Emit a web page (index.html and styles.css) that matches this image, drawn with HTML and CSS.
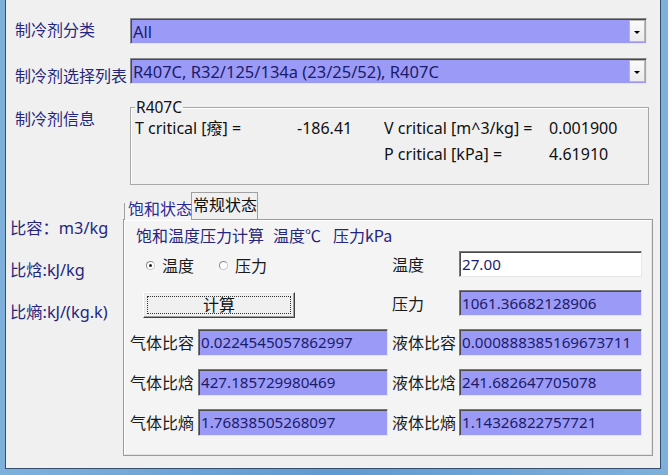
FILE: index.html
```html
<!DOCTYPE html>
<html lang="zh">
<head>
<meta charset="utf-8">
<title>制冷剂</title>
<link rel="stylesheet" href="styles.css">
</head>
<body>
<div class="frame">
  <div class="client">
    <div class="row r1">
      <div class="lbl navy">制冷剂分类</div>
      <div class="combo"><span class="val">All</span><span class="drop"><i class="tri"></i></span></div>
    </div>
    <div class="row r2">
      <div class="lbl navy">制冷剂选择列表</div>
      <div class="combo"><span class="val">R407C, R32/125/134a (23/25/52), R407C</span><span class="drop"><i class="tri"></i></span></div>
    </div>
    <div class="row r3">
      <div class="lbl navy">制冷剂信息</div>
      <fieldset class="group">
        <legend class="legend">R407C</legend>
        <div class="ginfo">
          <span>T critical [癈] =</span><span>-186.41</span><span>V critical [m^3/kg] =</span><span>0.001900</span>
          <span></span><span></span><span>P critical [kPa] =</span><span>4.61910</span>
        </div>
      </fieldset>
    </div>
    <div class="lower">
      <div class="side navy">
        <div class="sl">比容：m3/kg</div>
        <div class="sl">比焓:kJ/kg</div>
        <div class="sl">比熵:kJ/(kg.k)</div>
      </div>
      <div class="tabs">
        <div class="tabbar">
          <div class="tab t1">饱和状态</div>
          <div class="tab t2">常规状态</div>
        </div>
        <div class="panel">
          <div class="phead navy"><span>饱和温度压力计算</span><span class="hg1">温度℃</span><span class="hg2">压力kPa</span></div>
          <div class="pgrid">
            <div class="radios">
              <span class="radio on"></span><span class="rtext">温度</span>
              <span class="radio"></span><span class="rtext">压力</span>
            </div>
            <div class="flbl">温度</div>
            <div class="box white">27.00</div>

            <div class="btncell"><div class="btn"><span class="focus">计算</span></div></div>
            <div class="flbl">压力</div>
            <div class="box">1061.36682128906</div>

            <div class="flbl l">气体比容</div>
            <div class="box">0.0224545057862997</div>
            <div class="flbl">液体比容</div>
            <div class="box">0.000888385169673711</div>

            <div class="flbl l">气体比焓</div>
            <div class="box">427.185729980469</div>
            <div class="flbl">液体比焓</div>
            <div class="box">241.682647705078</div>

            <div class="flbl l">气体比熵</div>
            <div class="box">1.76838505268097</div>
            <div class="flbl">液体比熵</div>
            <div class="box">1.14326822757721</div>
          </div>
        </div>
      </div>
    </div>
  </div>
</div>
</body>
</html>
```
FILE: styles.css
```css
html, body {
  margin: 0;
  padding: 0;
}
body {
  width: 668px;
  height: 475px;
  overflow: hidden;
  font-family: "Noto Sans", "Noto Sans CJK SC", sans-serif;
  font-size: 15px;
  color: #111;
}
.frame {
  width: 668px;
  height: 475px;
  box-sizing: border-box;
  padding: 0 7px 6px 5px;
  background: linear-gradient(90deg, #7fb0dc 0%, #5f9ad0 50%, #7fb0dc 100%);
}
.client {
  height: 469px;
  box-sizing: border-box;
  background: #f0f0f0;
  border-left: 1px solid #34506e;
  border-right: 1px solid #34506e;
  border-bottom: 1px solid #34506e;
  display: flex;
  flex-direction: column;
}
.navy { color: #25257e; }
.row {
  display: flex;
  align-items: flex-start;
}
.lbl {
  width: 115px;
  padding-left: 9px;
  font-size: 16px;
  line-height: 22px;
  white-space: nowrap;
  font-family: "Noto Sans CJK SC", sans-serif;
}
.r1 { margin-top: 18px; }
.r2 { margin-top: 14px; }
.r2 .lbl { padding-top: 6px; }
.r3 { margin-top: 13px; }
.r3 .lbl { padding-top: 8px; }
.combo {
  width: 517px;
  height: 26px;
  box-sizing: border-box;
  display: flex;
  background: #9b9bf7;
  border: 1px solid;
  border-color: #8a8a8a #e6e6e6 #e6e6e6 #8a8a8a;
  box-shadow: inset 1px 1px 0 #4a4a4a;
}
.val {
  flex: 1;
  padding-left: 2px;
  line-height: 25px;
  font-size: 16.5px;
  color: #1c1c6a;
  white-space: nowrap;
}
.drop {
  width: 16px;
  margin: 1px 1px 1px 0;
  background: linear-gradient(#fafafa, #ececec);
  border: 1px solid #b8b8b8;
  box-sizing: border-box;
  display: flex;
  align-items: center;
  justify-content: center;
}
.tri {
  width: 0;
  height: 0;
  border-left: 3px solid transparent;
  border-right: 3px solid transparent;
  border-top: 3px solid #000;
  margin-top: 2px;
}
.group {
  margin: 0;
  width: 519px;
  box-sizing: border-box;
  padding: 0 0 16px 4px;
  border: 1px solid #a8a8a8;
  box-shadow: inset 1px 1px 0 #fff;
  height: 86px;
}
.legend {
  padding: 0 1px;
  margin-left: 0;
  line-height: 16px;
  font-size: 15.5px;
}
.ginfo {
  display: grid;
  grid-template-columns: 162px 87px 165px auto;
  grid-auto-rows: 26px;
  line-height: 26px;
  font-size: 16px;
  white-space: nowrap;
}
.lower {
  display: flex;
  margin-top: 7px;
}
.side {
  width: 113px;
  padding-left: 4px;
  padding-top: 25px;
  display: flex;
  flex-direction: column;
  gap: 20px;
  font-size: 16.3px;
  font-family: "Noto Sans", "Noto Sans CJK SC", sans-serif;
}
.sl {
  line-height: 22px;
  white-space: nowrap;
}
.tabs {
  display: flex;
  flex-direction: column;
}
.tabbar {
  display: flex;
  align-items: flex-end;
  height: 27px;
  padding-left: 1px;
}
.tab {
  font-size: 16px;
  font-family: "Noto Sans CJK SC", sans-serif;
  white-space: nowrap;
  box-sizing: border-box;
}
.t1 {
  width: 67px;
  height: 17px;
  line-height: 2px;
  padding-top: 4px;
  padding-left: 3px;
  color: #2a2a9a;
  border-left: 1px solid #a0a0a0;
  background: #f4f4f4;
  position: relative;
  top: 1px;
}
.t2 {
  width: 67px;
  height: 27px;
  line-height: 18px;
  padding-top: 2px;
  padding-left: 1px;
  border: 1px solid #a0a0a0;
  border-bottom: none;
  background: #f0f0f0;
}
.panel {
  width: 530px;
  height: 237px;
  box-sizing: border-box;
  border: 1px solid #9a9a9a;
  box-shadow: inset 1px 1px 0 #fff, inset -1px -1px 0 #e4e4e4;
  background: #f4f4f4;
  padding: 5px 0 0 6px;
}
.phead {
  padding-left: 6px;
  line-height: 20px;
  font-size: 16px;
  white-space: nowrap;
  font-family: "Noto Sans CJK SC", sans-serif;
  display: flex;
}
.hg1 { margin-left: 9px; }
.hg2 { margin-left: 12px; }
.pgrid {
  margin-top: 6px;
  display: grid;
  grid-template-columns: 68px 190px 71px 183px;
  grid-template-rows: 26px 26px 27px 27px 27px;
  row-gap: 13px;
}
.radios {
  grid-column: 1 / 3;
  display: flex;
  align-items: center;
  padding-left: 16px;
  padding-top: 2px;
}
.radio {
  width: 9px;
  height: 9px;
  box-sizing: border-box;
  border-radius: 50%;
  border: 1px solid #c8c8c8;
  border-left-color: #8a8a8a;
  border-top-color: #8a8a8a;
  background: #fff;
  display: flex;
  align-items: center;
  justify-content: center;
}
.radio.on::after {
  content: "";
  width: 3px;
  height: 3px;
  border-radius: 50%;
  background: #222;
}
.rtext {
  font-size: 16px;
  font-family: "Noto Sans CJK SC", sans-serif;
  margin-left: 7px;
  margin-right: 25px;
  color: #1a1a1a;
}
.btncell {
  grid-column: 1 / 3;
  padding-left: 13px;
  padding-top: 2px;
}
.btn {
  width: 152px;
  height: 26px;
  box-sizing: border-box;
  border: 1px solid;
  border-color: #fff #404040 #404040 #fff;
  box-shadow: inset -1px -1px 0 #a0a0a0, inset 1px 1px 0 #e8e8e8;
  background: #f0f0f0;
  padding: 3px;
}
.focus {
  display: block;
  height: 100%;
  box-sizing: border-box;
  border: 1px dotted #333;
  text-align: center;
  font-size: 16px;
  line-height: 15px;
  font-family: "Noto Sans CJK SC", sans-serif;
  color: #111;
}
.flbl {
  padding-left: 4px;
  font-size: 16px;
  font-family: "Noto Sans CJK SC", sans-serif;
  line-height: 27px;
  white-space: nowrap;
  color: #1a1a1a;
}
.flbl.l {
  padding-left: 0;
}
.box {
  box-sizing: border-box;
  background: #9b9bf7;
  border: 1px solid;
  border-color: #7a7a7a #e6e6e6 #e6e6e6 #7a7a7a;
  box-shadow: inset 1px 1px 0 #4a4a4a;
  padding-left: 2px;
  line-height: 24px;
  color: #1c1c6a;
  white-space: nowrap;
  overflow: hidden;
  font-size: 15.2px;
}
.box.white {
  background: #fff;
}
```
